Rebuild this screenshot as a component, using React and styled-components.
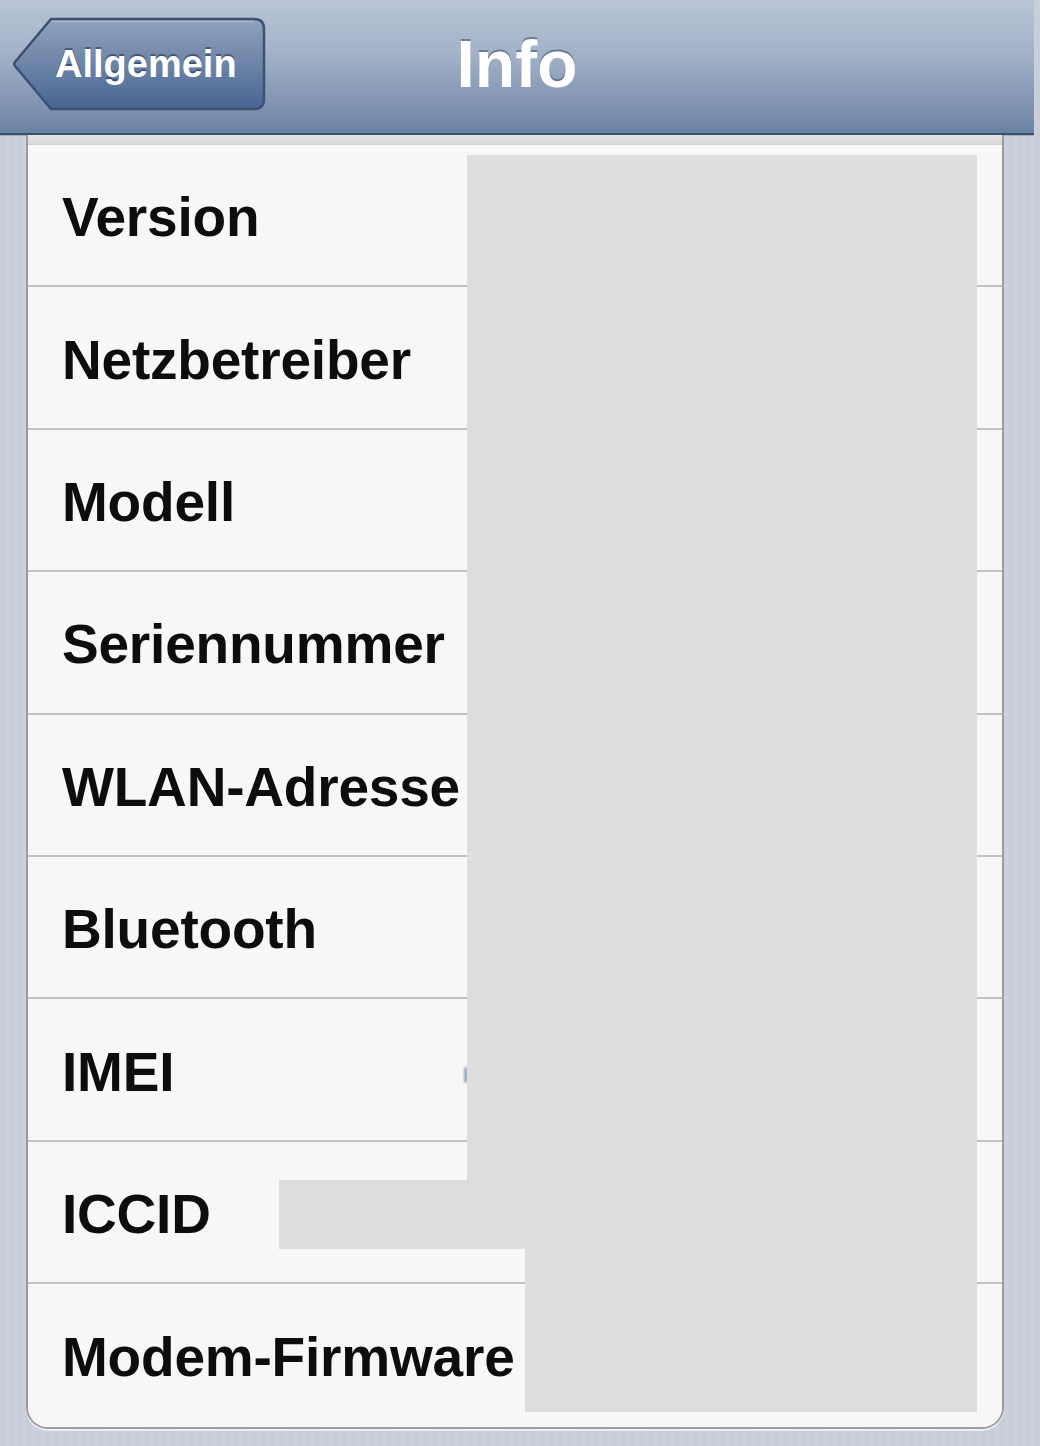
import React from "react";
import styled, { createGlobalStyle } from "styled-components";

const Global = createGlobalStyle`
  html, body {
    margin: 0;
    padding: 0;
  }
  body {
    font-family: "Liberation Sans", Arial, Helvetica, sans-serif;
    background: repeating-linear-gradient(90deg, #c7ced9 0px, #c7ced9 5px, #cbd2dd 5px, #cbd2dd 9px);
    min-height: 1446px;
  }
`;

const Page = styled.div`
  display: flex;
  flex-direction: column;
  width: 1040px;
  min-height: 1446px;
`;

const NavBar = styled.header`
  box-sizing: border-box;
  width: 1034px;
  height: 135px;
  padding: 17px 0 22px;
  display: grid;
  grid-template-columns: 1fr auto 1fr;
  align-items: center;
  background: linear-gradient(180deg, #b8c4d6 0%, #a6b5ca 35%, #8a9db8 68%, #6a82a2 100%);
  border-bottom: 2px solid #3b506f;
  box-shadow: 0 1px 0 rgba(60, 70, 90, 0.25);
`;

const BackButton = styled.button`
  position: relative;
  justify-self: start;
  margin-left: 12px;
  width: 254px;
  height: 94px;
  padding: 0 0 0 43px;
  border: none;
  background: transparent;
  display: flex;
  align-items: center;
  cursor: pointer;
`;

const ButtonShape = styled.svg`
  position: absolute;
  inset: 0;
  width: 254px;
  height: 94px;
`;

const ButtonLabel = styled.span`
  position: relative;
  font-family: "Liberation Sans", Arial, sans-serif;
  font-weight: 700;
  font-size: 38px;
  color: #ffffff;
  text-shadow: 0 -2px 0 rgba(30, 44, 68, 0.55);
`;

const Title = styled.h1`
  margin: 0;
  font-family: "Liberation Sans", Arial, sans-serif;
  font-weight: 700;
  font-size: 66px;
  line-height: 94px;
  color: #ffffff;
  text-shadow: 0 -2px 0 rgba(50, 66, 92, 0.5);
`;

const Content = styled.main`
  padding: 0 36px 0 26px;
`;

const Card = styled.section`
  position: relative;
  box-sizing: border-box;
  width: 978px;
  background: #f7f7f7;
  border: 2px solid #9c9c9c;
  border-top: none;
  border-radius: 0 0 22px 22px;
  overflow: hidden;
  box-shadow: 0 2px 0 rgba(255, 255, 255, 0.6);
`;

const TopEdge = styled.div`
  box-sizing: border-box;
  height: 10px;
  background: linear-gradient(180deg, #e4e4e4, #d8d8d8);
  border-bottom: 1px solid #cfcfcf;
`;

const Row = styled.div`
  box-sizing: border-box;
  height: 142.4px;
  display: flex;
  align-items: center;
  padding-left: 34px;
  padding-top: 4px;
  border-bottom: ${(p) => (p.$last ? "none" : "2px solid #c3c3c3")};
  background: #f7f7f7;
`;

const Label = styled.span`
  font-family: "Liberation Sans", Arial, sans-serif;
  font-weight: 700;
  font-size: 55px;
  color: #0d0d0d;
  letter-spacing: -0.2px;
`;

const Redaction = styled.div`
  position: absolute;
  background: #dedede;
`;

const Smudge = styled.div`
  position: absolute;
  left: 436px;
  top: 932px;
  width: 4px;
  height: 16px;
  border-radius: 3px;
  background: #9aa8c4;
  filter: blur(0.8px);
`;

const rows = [
  "Version",
  "Netzbetreiber",
  "Modell",
  "Seriennummer",
  "WLAN-Adresse",
  "Bluetooth",
  "IMEI",
  "ICCID",
  "Modem-Firmware",
];

const boxes = [
  { left: 439, top: 20, width: 510, height: 1094 },
  { left: 251, top: 1045, width: 190, height: 69 },
  { left: 497, top: 1114, width: 452, height: 163 },
];

export default function App() {
  return (
    <>
      <Global />
      <Page>
        <NavBar>
          <BackButton type="button">
            <ButtonShape viewBox="0 0 254 94">
              <defs>
                <linearGradient id="btnFill" x1="0" y1="0" x2="0" y2="1">
                  <stop offset="0" stopColor="#8fa3bf" />
                  <stop offset="0.5" stopColor="#6c84a8" />
                  <stop offset="1" stopColor="#476591" />
                </linearGradient>
              </defs>
              <path
                d="M39 2 H242 Q252 2 252 12 V82 Q252 92 242 92 H39 L3 49 Q1.5 47 3 45 Z"
                fill="url(#btnFill)"
                stroke="#3d5173"
                strokeWidth="2.5"
              />
              <path
                d="M40 4.5 H241"
                stroke="rgba(255,255,255,0.25)"
                strokeWidth="1.5"
                fill="none"
              />
            </ButtonShape>
            <ButtonLabel>Allgemein</ButtonLabel>
          </BackButton>
          <Title>Info</Title>
          <div />
        </NavBar>
        <Content>
          <Card>
            <TopEdge />
            {rows.map((r, i) => (
              <Row key={r} $last={i === rows.length - 1}>
                <Label>{r}</Label>
              </Row>
            ))}
            <Smudge />
            {boxes.map((b, i) => (
              <Redaction
                key={i}
                style={{ left: b.left, top: b.top, width: b.width, height: b.height }}
              />
            ))}
          </Card>
        </Content>
      </Page>
    </>
  );
}
